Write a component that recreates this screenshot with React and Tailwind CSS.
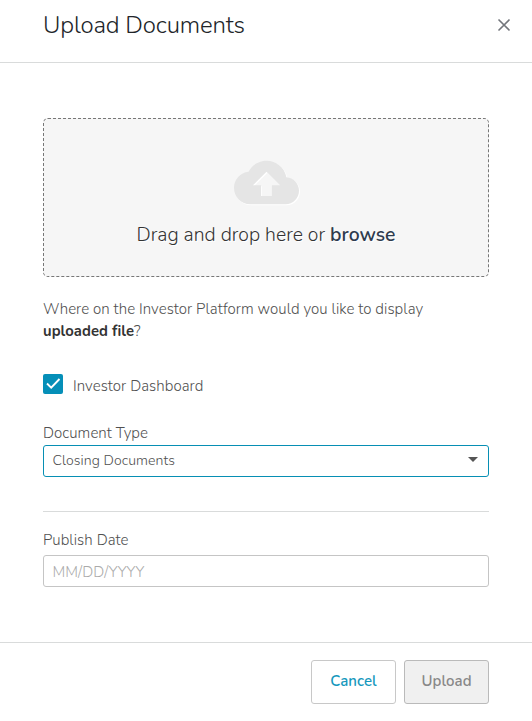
import React, { useState } from "react";

function Header() {
  return (
    <div className="flex h-[63px] items-start justify-between border-b border-[#d9dbdb] pl-[43px] pr-[21px]">
      <h1 className="mt-[7px] text-[24px] font-light leading-9 tracking-[-0.15px] text-[#212529]">
        Upload Documents
      </h1>
      <button type="button" aria-label="Close" className="mt-[18px]">
        <svg width="14" height="14" viewBox="0 0 14 14" fill="none">
          <path
            d="M1.5 1.5 12.5 12.5 M12.5 1.5 1.5 12.5"
            stroke="#73767c"
            strokeWidth="1.6"
          />
        </svg>
      </button>
    </div>
  );
}

function DropZone() {
  return (
    <div className="flex h-[159px] flex-col items-center rounded-[5px] border border-dashed border-[#777] bg-[#f6f6f6] pt-[31px]">
      <svg
        width="65"
        height="65"
        viewBox="0 0 24 24"
        fill="#e5e5e5"
        className="drop-shadow-[1px_1px_0_#fff]"
      >
        <path d="M19.35 10.04C18.67 6.59 15.64 4 12 4 9.11 4 6.6 5.64 5.35 8.04 2.34 8.36 0 10.91 0 14c0 3.31 2.69 6 6 6h13c2.76 0 5-2.24 5-5 0-2.64-2.05-4.78-4.65-4.96zM14 13v4h-4v-4H7l5-5 5 5h-3z" />
      </svg>
      <p className="mt-1.5 whitespace-nowrap text-[19.4px] font-[340] leading-7 tracking-[0.02px] text-[#333] [text-shadow:1px_1px_0_#fff]">
        <span>Drag and drop here or </span>
        <span className="font-[650] text-[#2e3b4e]">browse</span>
      </p>
    </div>
  );
}

function Footer() {
  return (
    <div className="flex h-[79px] justify-end gap-2 border-t border-[#d9dbdb] pr-[43px] pt-[17px]">
      <button
        type="button"
        className="h-11 w-[85px] rounded-[3px] border border-[#c8c8c8] pb-0.5 text-[15px] font-semibold text-[#1698bd]"
      >
        Cancel
      </button>
      <button
        type="button"
        className="h-11 w-[85px] rounded-[3px] border border-[#bababa] bg-[#f0f0f0] pb-0.5 text-[15px] font-semibold text-[#888]"
      >
        Upload
      </button>
    </div>
  );
}

export default function App() {
  const [checked, setChecked] = useState(true);
  const [date, setDate] = useState("");

  return (
    <div className="flex h-[721px] w-[532px] flex-col bg-white font-['Nunito','Open_Sans',sans-serif] text-[15px] font-[350] tracking-[0.06px] text-[#505050]">
      <Header />
      <div className="flex-1 px-[43px] pt-[55px]">
        <DropZone />
        <p className="mt-[21px] whitespace-nowrap leading-[22px]">
          Where on the Investor Platform would you like to display
          <br />
          <span className="text-[14.8px] font-bold text-[#333]">uploaded file</span>?
        </p>
        <div className="mt-8 flex h-5 items-center gap-[10px]">
          <button
            type="button"
            role="checkbox"
            aria-checked={checked}
            aria-label="Investor Dashboard"
            onClick={() => setChecked(!checked)}
            className="h-5 w-5 rounded-[2px] bg-[#058fb8]"
          >
            {checked && (
              <svg width="20" height="20" viewBox="0 0 20 20" fill="none">
                <path d="M4 9.5 8.2 13.6 16.5 5" stroke="#fff" strokeWidth="1.9" />
              </svg>
            )}
          </button>
          <span className="pt-1">Investor Dashboard</span>
        </div>
        <label className="mt-7 block h-[23px] leading-[22px]">
          Document Type
        </label>
        <div className="flex h-8 items-center justify-between rounded-[3px] border border-[#078fb4] pl-[8.5px] pr-[10px] text-[14.1px]">
          <span className="pb-px">Closing Documents</span>
          <svg width="10" height="5" viewBox="0 0 10 5" className="mb-1">
            <path d="M0 0h10L5 5z" fill="#555" />
          </svg>
        </div>
        <div className="mt-[34px] border-t border-[#d9dbdb]" />
        <label
          htmlFor="publishDate"
          className="mt-[17px] block h-[26px] leading-[22px]"
        >
          Publish Date
        </label>
        <input
          id="publishDate"
          type="text"
          placeholder="MM/DD/YYYY"
          value={date}
          onChange={(e) => setDate(e.target.value)}
          className="block h-8 w-full rounded-[3px] border border-[#c5c5c5] px-[8.5px] pt-0.5 text-[15px] font-light placeholder:text-[#aaa]"
        />
      </div>
      <Footer />
    </div>
  );
}
